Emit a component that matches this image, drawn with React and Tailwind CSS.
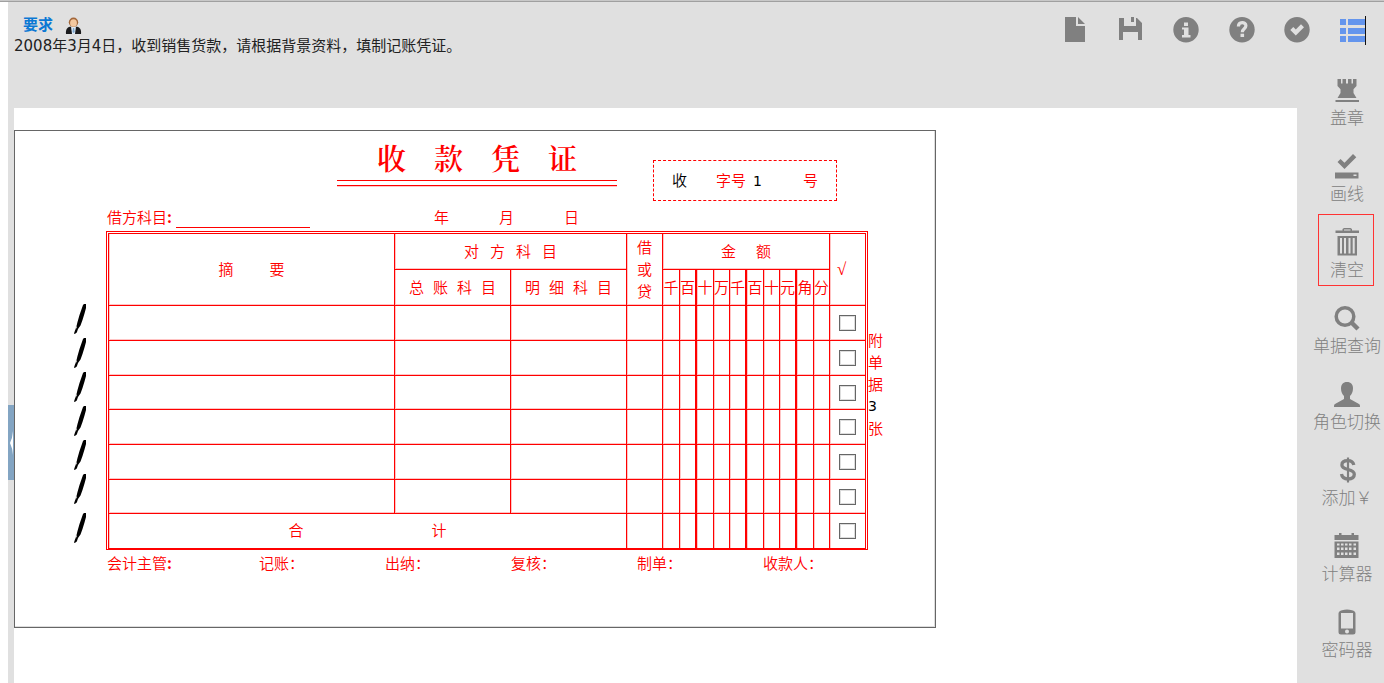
import React from "react";

const glyphs = {
  file: (
    <path d="M4 1h11v9h9v16H4z M17 1l7 7h-7z" />
  ),
  save: (
    <path d="M2 2h5v8h12V2h1l5 5v17h-4v-8H6v8H2z M14 1h3v5h-3z" />
  ),
  info: (
    <path
      fillRule="evenodd"
      d="M14 1a12.700 12.700 0 1 1 0 25.400a12.700 12.700 0 1 1 0-25.400z M12 6.500v3.500h4V6.500z M10 11.500v2h2v5.500h-2v2.500h8.500V19H16.500v-7.500z"
    />
  ),
  question: (
    <g>
      <circle cx="14" cy="13.700" r="12.700" />
      <path d="M10.400 10.500c0-5 7.500-5 7.500-.7 0 3-3.600 2.900-3.600 6.400" fill="none" stroke="#e0e0e0" strokeWidth="3.200" />
      <path d="M12.500 17.700h3.600v3.300h-3.600z" fill="#e0e0e0" />
    </g>
  ),
  ok: (
    <g>
      <circle cx="14" cy="13.700" r="12.700" />
      <path d="M7.300 14l3-3 2.500 2.500 5.200-5.300 3 3-8.200 8.200z" fill="#e0e0e0" />
    </g>
  ),
  list: (
    <g>
      <path d="M1 3h6v6H1z M9 3H26v6H9z M1 12h6v6H1z M9 12H26v6H9z M1 20h6v6H1z M9 20H26v6H9z" />
      <path d="M26 0h1v29h-1z" fill="#111" />
    </g>
  ),
  tower: (
    <path d="M4.500 3H8v4.500h1.500V3H13v4.500h2V3h3.500v4.500H20V3h3.500v7l-3 3.200v3.800l3 5h-19l3-5v-3.800l-3-3.200z M2.500 24h23.500v2H2.500z" />
  ),
  saved: (
    <path
      fillRule="evenodd"
      d="M4.500 10l3-3 4 3.800L20 2l3.300 3.200L11.500 17z M2 20.500h23.500v6H2z M20.500 22.500v1.500h3v-1.500z"
    />
  ),
  trash: (
    <path
      fillRule="evenodd"
      d="M2.500 2.500h7V1L11 0h6.500L19 1v1.500h7v2.500h-23.500z M11 2.500h6.500V1.500H11z M4.500 8h19.500V27.500H4.500z M7 10V25.500h2V10z M11 10V25.500h2V10z M15.500 10V25.500h2V10z M19.700 10V25.500h2V10z"
    />
  ),
  search: (
    <g fill="none" stroke="currentColor">
      <circle cx="12" cy="12.500" r="8.800" strokeWidth="3.500" />
      <path d="M18.500 18.500l6.500 6.500" strokeWidth="4.500" />
    </g>
  ),
  user: (
    <path d="M14 2c4 0 6 2.500 6 6.500 0 3.500-1.500 6-3 7.500v3l9 5c1 .6 1 1.500 1 3H1c0-1.500 0-2.400 1-3l9-5v-3c-1.500-1.500-3-4-3-7.500C8 4.500 10 2 14 2z" />
  ),
  dollar: (
    <g fill="none" stroke="currentColor">
      <path d="M20.800 9c-.6-3-2.800-4.300-6-4.300-3.600 0-5.900 1.500-5.900 4.300 0 6 12.400 3 12.400 9.300 0 3-2.500 4.700-6.300 4.700-3.800 0-6-1.600-6.500-4.900" strokeWidth="3.300" />
      <path d="M15 1.500v25" strokeWidth="2.200" />
    </g>
  ),
  calendar: (
    <path
      fillRule="evenodd"
      d="M6 1h2.500v2h10V1H21v2h4.500v5h-24V3H6z M1.500 9.500h24V26h-24z M4 11.500v2h2.500v-2z M8 11.500v2h2.500v-2z M12 11.500v2h2.500v-2z M16 11.500v2h2.500v-2z M20.500 11.500v2H23v-2z M4 15.500v2.500h2.500v-2.500z M8 15.500v2.500h2.500v-2.500z M12 15.500v2.500h2.500v-2.500z M16 15.500v2.500h2.500v-2.500z M20.500 15.500v2.500H23v-2.500z M4 20.500v2.500h2.500v-2.500z M8 20.500v2.500h2.500v-2.500z M12 20.500v2.500h2.500v-2.500z M16 20.500v2.500h2.500v-2.500z M20.500 20.500v2.500H23v-2.500z"
    />
  ),
  phone: (
    <path
      fillRule="evenodd"
      d="M9 2.200Q14 .8 19 2.200Q22.500 3 22.500 5.500V24Q22.500 26.500 20 26.500H8Q5.500 26.500 5.500 24V5.500Q5.500 3 9 2.200z M8 5v15.500h12V5z M14 21.500a2 2 0 1 0 0 4a2 2 0 1 0 0-4z"
    />
  ),
};

function Glyph({ name }) {
  return (
    <svg viewBox="0 0 28 30" className="h-[30px] w-7 shrink-0" fill="currentColor" aria-hidden="true">
      {glyphs[name]}
    </svg>
  );
}

const toolbar = [
  ["file", "新建"],
  ["save", "保存"],
  ["info", "信息"],
  ["question", "帮助"],
  ["ok", "提交"],
  ["list", "列表"],
];

const tools = [
  ["tower", "盖章"],
  ["saved", "画线"],
  ["trash", "清空"],
  ["search", "单据查询"],
  ["user", "角色切换"],
  ["dollar", "添加￥"],
  ["calendar", "计算器"],
  ["phone", "密码器"],
];

const cell = "border-r border-b border-[#f00] p-0 text-center font-[350] shadow-[inset_1px_-1px_0_#ffc4c4]";
const thickCell = "border-r-2 border-b border-[#f00] p-0 text-center font-[350] shadow-[inset_1px_-1px_0_#ffc4c4]";
const lastCell = "border-b border-[#f00] p-0 text-center font-[350] shadow-[inset_1px_-1px_0_#ffc4c4]";
const footCell = "border-r border-[#f00] p-0 text-center shadow-[inset_1px_0_0_#ffc4c4]";
const thickFootCell = "border-r-2 border-[#f00] p-0 text-center shadow-[inset_1px_0_0_#ffc4c4]";

const digits = ["千", "百", "十", "万", "千", "百", "十", "元", "角", "分"];
const isThick = (i) => i === 1 || i === 4 || i === 7;
const rowHeights = ["h-[35px]", "h-[35px]", "h-[34px]", "h-[35px]", "h-[35px]", "h-[34px]"];
const signers = ["记账：", "出纳：", "复核：", "制单：", "收款人："];

function Spread({ text, gap }) {
  return (
    <span className={`flex justify-center pb-[2px] ${gap}`}>
      {[...text].map((c, i) => (
        <span key={i}>{c}</span>
      ))}
    </span>
  );
}

function Tick({ row }) {
  return (
    <input
      type="checkbox"
      aria-label={`第${row}行`}
      className="mx-auto block h-4 w-[17px] appearance-none border border-[#666] bg-white shadow-[inset_0_0_0_1px_#ddd]"
    />
  );
}

function Pen() {
  return (
    <svg viewBox="0 0 13 30" className="block h-[30px] w-[13px]" aria-hidden="true">
      <path d="M9 1L10 0H12L12 4 10.500 9.500 8.500 16 6.500 21.500 4 25 2.800 28.500 0.800 30 0 29.500 1 26.500 2 24 3.500 18 5.500 11z" fill="#000" />
      <path d="M2 21.500l1 2-1.500 2z" fill="#bbb" />
    </svg>
  );
}

function Avatar() {
  return (
    <svg viewBox="0 0 17 17" className="h-[17px] w-[17px]" aria-hidden="true">
      <path d="M1 17c-.5-4 1-6.500 4-7.200h7c3 .7 4.500 3.200 4 7.200z" fill="#1b1b1d" />
      <path d="M6 9.500h5L10 17H7z" fill="#dfeaf5" />
      <path d="M8 11h1.200l.5 4-1.100 1-1.100-1z" fill="#7fa9d0" />
      <circle cx="8.500" cy="5.200" r="4.700" fill="#a3673a" />
      <ellipse cx="8.500" cy="6" rx="3.400" ry="3.800" fill="#f4c9a0" />
    </svg>
  );
}

function VoucherTable() {
  return (
    <div className="w-[762px] border-[3px] border-b-2 border-double border-[#f00] [border-bottom-style:solid]">
      <table className="w-full table-fixed border-separate border-spacing-0 text-[15px] leading-[22px]">
        <colgroup>
          <col className="w-[286px]" />
          <col className="w-[116px]" />
          <col className="w-[116px]" />
          <col className="w-9" />
          {[17, 17, 17, 16, 17, 17, 16, 17, 17, 16].map((w, i) => (
            <col key={i} className={w === 17 ? "w-[17px]" : "w-4"} />
          ))}
          <col className="w-[35px]" />
        </colgroup>
        <thead>
          <tr className="h-9">
            <th rowSpan={2} className={cell}><Spread text="摘要" gap="gap-9" /></th>
            <th colSpan={2} className={cell}><Spread text="对方科目" gap="gap-[11px]" /></th>
            <th rowSpan={2} className={cell}><span className="block pb-[2px]">借<br />或<br />贷</span></th>
            <th colSpan={10} className={cell}><Spread text="金额" gap="gap-5" /></th>
            <th rowSpan={2} className={lastCell}>
              <span className="block pr-3 font-['Liberation_Serif','DejaVu_Serif',serif] text-[17px] font-bold">√</span>
            </th>
          </tr>
          <tr className="h-9">
            <th className={cell}><Spread text="总账科目" gap="gap-[9px]" /></th>
            <th className={cell}><Spread text="明细科目" gap="gap-[9px]" /></th>
            {digits.map((d, i) => (
              <th key={i} className={isThick(i) ? thickCell : cell}>
                <span className="block pb-[2px]">{d}</span>
              </th>
            ))}
          </tr>
        </thead>
        <tbody>
          {rowHeights.map((h, r) => (
            <tr key={r} className={h}>
              <td className={cell} />
              <td className={cell} />
              <td className={cell} />
              <td className={cell} />
              {digits.map((_, i) => (
                <td key={i} className={isThick(i) ? thickCell : cell} />
              ))}
              <td className={lastCell}><Tick row={r + 1} /></td>
            </tr>
          ))}
          <tr className="h-[34px]">
            <td colSpan={3} className={footCell}><Spread text="合计" gap="gap-32" /></td>
            <td className={footCell} />
            {digits.map((_, i) => (
              <td key={i} className={isThick(i) ? thickFootCell : footCell} />
            ))}
            <td className="p-0 shadow-[inset_1px_0_0_#ffc4c4]"><Tick row={7} /></td>
          </tr>
        </tbody>
      </table>
    </div>
  );
}

function Voucher() {
  return (
    <section className="mt-[22px] min-h-[498px] w-[922px] border border-[#666] font-['Noto_Sans_CJK_SC',sans-serif] text-[15px] font-[350] text-[#f00] shadow-[inset_-1px_-1px_0_#ddd]">
      <div className="flex h-[70px] items-start">
        <div className="ml-[322px] w-[280px] pt-[7px]">
          <h1 className="flex justify-center gap-7 font-['Noto_Serif_CJK_SC','Noto_Sans_CJK_SC',serif] text-[29px] leading-10 font-semibold">
            <span>收</span><span>款</span><span>凭</span><span>证</span>
          </h1>
          <div className="mt-[2px] h-[6px] border-y border-[#f00] shadow-[0_1px_0_#ffc4c4]" />
        </div>
        <div className="mt-[29px] ml-9 flex h-[41px] w-[184px] items-center border border-dashed border-[#f00]">
          <input aria-label="凭证字" defaultValue="收" className="ml-[18px] w-11 bg-transparent text-black outline-none" />
          <span>字号</span>
          <input
            aria-label="凭证号"
            defaultValue="1"
            className="ml-[7px] w-[50px] bg-transparent font-['DejaVu_Sans',sans-serif] text-sm font-normal text-black outline-none"
          />
          <span>号</span>
        </div>
      </div>
      <div className="ml-[92px] flex h-[30px] items-start leading-[31px]">
        <label htmlFor="debit" className="w-[69px]">借方科目<span className="font-bold">:</span></label>
        <input id="debit" className="h-[27px] w-[134px] border-b border-[#f00] bg-transparent outline-none" />
        <div className="ml-[124px] flex gap-[50px]">
          <span>年</span><span>月</span><span>日</span>
        </div>
      </div>
      <div className="flex items-start">
        <div className="ml-[59px] flex w-8 flex-col gap-1 pt-[73px]">
          {[1, 2, 3, 4, 5, 6].map((n) => <Pen key={n} />)}
          <div className="pt-[5px]"><Pen /></div>
        </div>
        <VoucherTable />
        <div className="flex flex-col pt-[98px] leading-[22px]">
          <span>附</span><span>单</span><span>据</span>
          <span className="font-['DejaVu_Sans',sans-serif] text-sm leading-[22px] font-normal text-black">3</span>
          <span>张</span>
        </div>
      </div>
      <div className="ml-[92px] flex leading-[25px]">
        <span className="w-[152px]">会计主管<span className="font-bold">:</span></span>
        {signers.map((s) => (
          <span key={s} className="w-[126px]">{s}</span>
        ))}
      </div>
    </section>
  );
}

export default function App() {
  return (
    <div className="flex min-h-screen flex-col border-t border-[#c8c8c8] bg-white font-['DejaVu_Sans','Noto_Sans_CJK_SC',sans-serif]">
      <div className="flex flex-1 flex-col border-t border-[#a0a0a0] pl-2">
        <div className="flex flex-1 flex-col bg-[#e0e0e0]">
          <header className="flex h-[60px] items-start justify-between">
            <div className="pt-[13px] pl-[6px] text-[15px] leading-[21px] text-[#222]">
              <div className="flex items-center gap-3 pl-[9px]">
                <a href="#task" className="font-bold text-[#0b78d4]">要求</a>
                <Avatar />
              </div>
              <p>2008年3月4日，收到销售货款，请根据背景资料，填制记账凭证。</p>
            </div>
            <nav className="mr-[17px] flex w-[306px] justify-between pt-[14px] text-[#808080]">
              {toolbar.map(([name, label]) => (
                <button key={name} type="button" aria-label={label} className={name === "list" ? "text-[#6495ed]" : ""}>
                  <Glyph name={name} />
                </button>
              ))}
            </nav>
          </header>
          <div className="flex flex-1">
            <div className="w-[6px] shrink-0 pt-[343px]">
              <button type="button" aria-label="收起" className="flex h-[75px] w-full items-center justify-end bg-[#83a5c3]">
                <svg viewBox="0 0 4 26" className="h-[26px] w-1" aria-hidden="true">
                  <path d="M3 1Q2.500 8 0 13Q2.500 18 3 25z" fill="#fff" />
                </svg>
              </button>
            </div>
            <main className="flex flex-1 flex-col pt-[46px]">
              <div className="flex-1 bg-white">
                <div className="flex">
                  <Voucher />
                </div>
              </div>
            </main>
            <aside className="flex w-[87px] shrink-0 flex-col items-center gap-1 pl-[11px]">
              {tools.map(([name, label]) => (
                <button
                  key={name}
                  type="button"
                  className={`flex h-[72px] flex-col items-center border pt-[13px] pl-[2px] text-[17px] leading-6 font-light whitespace-nowrap text-[#808080] ${
                    name === "trash" ? "w-14 border-[#f33]" : "w-[74px] border-transparent"
                  }`}
                >
                  <Glyph name={name} />
                  {label}
                </button>
              ))}
            </aside>
          </div>
        </div>
      </div>
    </div>
  );
}
